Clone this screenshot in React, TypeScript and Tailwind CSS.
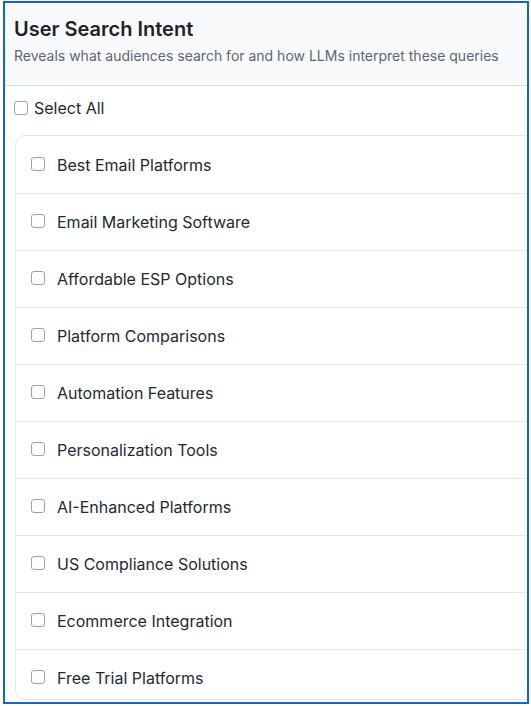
import React from 'react';

const intents = [
  'Best Email Platforms',
  'Email Marketing Software',
  'Affordable ESP Options',
  'Platform Comparisons',
  'Automation Features',
  'Personalization Tools',
  'AI-Enhanced Platforms',
  'US Compliance Solutions',
  'Ecommerce Integration',
  'Free Trial Platforms',
];

const Box: React.FC = () => (
  <span className="block w-[14px] h-[14px] shrink-0 rounded-[3px] border border-[#a2a2a2] bg-white" />
);

const App: React.FC = () => {
  return (
    <div className="w-[531px] h-[706px] bg-white font-['Inter','Liberation_Sans',sans-serif]">
      <div className="ml-[3px] pt-[1px]">
        <div className="w-[526px] h-[703px] border-2 border-[#1565c8] overflow-hidden bg-white">
          {/* Header */}
          <div className="h-[83px] bg-[#f8fafc] border-b border-[#d5dde6] pl-[9px] pt-[13px]">
            <h2 className="text-[20px] leading-[26px] font-semibold text-[#1f2328]">User Search Intent</h2>
            <p className="mt-[4px] text-[14px] leading-[20px] text-[#5f6670]">
              Reveals what audiences search for and how LLMs interpret these queries
            </p>
          </div>

          {/* Select all */}
          <label className="flex items-center gap-[6px] pl-[9px] mt-[11px] h-[22px]">
            <Box />
            <span className="text-[16px] text-[#24292f]">Select All</span>
          </label>

          {/* Intent list */}
          <div className="ml-[10px] mt-[16px] w-[560px] h-[565px] overflow-hidden rounded-[10px] border border-[#e3e6ea]">
            {intents.map((item, i) => (
              <div
                key={item}
                className={`flex items-center h-[57px] pl-[15px] gap-[12px] ${i > 0 ? 'border-t border-[#e3e6ea]' : ''}`}
              >
                <span className="-mt-[2px]">
                  <Box />
                </span>
                <span className="text-[16px] text-[#24292f]">{item}</span>
              </div>
            ))}
          </div>
        </div>
      </div>
    </div>
  );
};

export default App;
